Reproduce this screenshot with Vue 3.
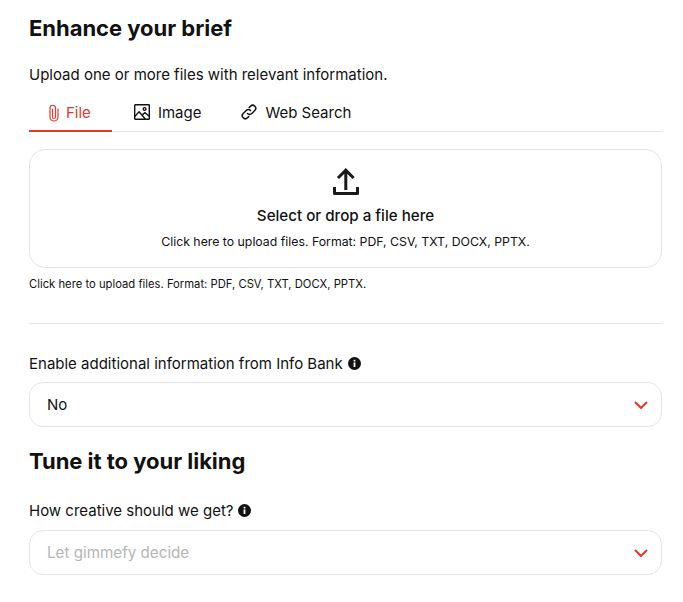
<script setup>
const tabs = ['File', 'Image', 'Web Search']
</script>

<template>
  <main class="page">
    <h2 class="title first">Enhance your brief</h2>
    <p class="lead">Upload one or more files with relevant information.</p>
    <nav class="tabs">
      <div class="tab active">
        <svg width="18" height="18" viewBox="0 0 18 18" fill="none" stroke="currentColor" stroke-width="1.2" stroke-linecap="round"><path d="M8.5 5v8a1.5 1.5 0 0 0 3 0V4a2.75 2.75 0 0 0-5.5 0v9a4 4 0 0 0 8 0V5"/></svg>
        <span>{{ tabs[0] }}</span>
      </div>
      <div class="tab">
        <svg width="18" height="18" viewBox="0 0 18 18" fill="none" stroke="currentColor" stroke-width="1.4"><rect x="1.7" y="1.7" width="14.6" height="14.6" rx=".6"/><path d="M1.7 13.4l4.4-4.6 6.4 7.5M9.6 11.6l2.4-2 4.3 3.6"/><circle cx="11.6" cy="6" r="1.4"/></svg>
        <span>{{ tabs[1] }}</span>
      </div>
      <div class="tab">
        <svg width="18" height="18" viewBox="0 0 18 18" fill="none" stroke="currentColor" stroke-width="1.5" stroke-linecap="round"><path d="M7.5 10.5a3 3 0 0 0 4.3 0l3-3a3 3 0 0 0-4.3-4.3l-1.2 1.2"/><path d="M10.5 7.5a3 3 0 0 0-4.3 0l-3 3a3 3 0 0 0 4.3 4.3l1.2-1.2"/></svg>
        <span>{{ tabs[2] }}</span>
      </div>
    </nav>
    <section class="drop">
      <svg width="26" height="27" viewBox="0 0 26 27" fill="none" stroke="#1a1a1a" stroke-width="3"><path d="M12.8 22V3M5 10l7.8-7.8L20.6 10"/><path d="M1.5 19v6.5h23V19" stroke-linejoin="round"/></svg>
      <strong>Select or drop a file here</strong>
      <small>Click here to upload files. Format: PDF, CSV, TXT, DOCX, PPTX.</small>
    </section>
    <p class="hint">Click here to upload files. Format: PDF, CSV, TXT, DOCX, PPTX.</p>
    <hr />
    <label class="label">Enable additional information from Info Bank
      <svg class="info" width="13" height="13" viewBox="0 0 13 13"><circle cx="6.5" cy="6.5" r="6.5" fill="#111"/><rect x="5.6" y="5.4" width="1.8" height="4.6" fill="#fff"/><rect x="5.6" y="2.8" width="1.8" height="1.7" fill="#fff"/></svg>
    </label>
    <div class="select">
      <span>No</span>
      <svg width="14" height="8" viewBox="0 0 14 8" fill="none" stroke="#e0392b" stroke-width="2"><path d="M1 1l6 6 6-6"/></svg>
    </div>
    <h2 class="title second">Tune it to your liking</h2>
    <label class="label two">How creative should we get?
      <svg class="info" width="13" height="13" viewBox="0 0 13 13"><circle cx="6.5" cy="6.5" r="6.5" fill="#111"/><rect x="5.6" y="5.4" width="1.8" height="4.6" fill="#fff"/><rect x="5.6" y="2.8" width="1.8" height="1.7" fill="#fff"/></svg>
    </label>
    <div class="select lower">
      <span class="ph">Let gimmefy decide</span>
      <svg width="14" height="8" viewBox="0 0 14 8" fill="none" stroke="#e0392b" stroke-width="2"><path d="M1 1l6 6 6-6"/></svg>
    </div>
  </main>
</template>

<style>
body { background: #fff; }
</style>

<style scoped>
.page { box-sizing: border-box; width: 683px; height: 602px; overflow: hidden; padding: 0 21px 0 29px; font-family: Inter, sans-serif; color: #111; }
.title { margin: 0; font-size: 22px; line-height: 28px; font-weight: 700; letter-spacing: -.03px; }
.first { padding-top: 14px; }
.lead { margin: 23px 0 0; font-size: 15px; line-height: 20px; }
.tabs { display: flex; height: 38px; margin-top: 8px; border-bottom: 1px solid #e5e5e5; box-sizing: content-box; }
.tab { display: flex; align-items: center; gap: 7px; padding: 0 19px 0 17px; font-size: 15px; }
.tab:nth-child(2) { padding: 0 22px 0 21px; }
.tab.active { color: #e0392b; border-bottom: 2px solid #e0392b; margin-bottom: -1px; padding: 2px 21px 0 15px; gap: 4px; }
.drop { box-sizing: border-box; height: 119px; margin-top: 17px; border: 1px solid #e5e5e5; border-radius: 16px; display: flex; flex-direction: column; align-items: center; padding-top: 18px; }
.drop strong { font-size: 15.15px; line-height: 20px; font-weight: 500; margin-top: 11px; }
.drop small { font-size: 12.3px; line-height: 16px; margin-top: 8px; }
.hint { margin: 8px 0 0; font-size: 11.25px; line-height: 16px; }
hr { margin: 31px 0 0; border: 0; border-top: 1px solid #e5e5e5; }
.label { display: flex; align-items: center; gap: 5px; margin-top: 30px; font-size: 15px; line-height: 20px; }
.info { margin-top: -2px; }
.select { box-sizing: border-box; height: 45px; margin-top: 8px; padding: 0 13px 0 17px; border: 1px solid #e5e5e5; border-radius: 14px; display: flex; align-items: center; justify-content: space-between; font-size: 15px; }
.select span { margin-top: -1px; }
.lower { margin-top: 9px; }
.ph { color: #b5b5b5; font-size: 15.2px; }
.second { margin-top: 20px; }
.two { margin-top: 26px; }
</style>
